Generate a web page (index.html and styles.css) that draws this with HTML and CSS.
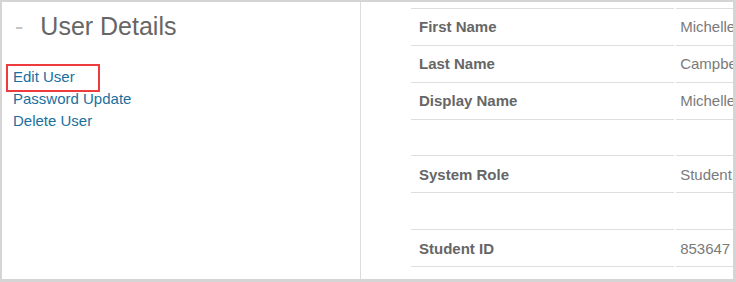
FILE: index.html
```html
<!DOCTYPE html>
<html lang="en">
<head>
    <meta charset="UTF-8">
    <title>User Details</title>
    <link rel="stylesheet" href="styles.css">
</head>
<body>
    <div class="frame">
        <div class="side">
            <h2 class="title"><span class="dash">-</span>User Details</h2>
            <ul class="actions">
                <li><a href="#">Edit User</a></li>
                <li><a href="#">Password Update</a></li>
                <li><a href="#">Delete User</a></li>
            </ul>
            <!-- annotation box round the first link -->
            <div class="callout"></div>
        </div>
        <div class="main">
            <table class="details">
                <colgroup>
                    <col class="label-col">
                    <col class="value-col">
                </colgroup>
                <tr><th>First Name</th><td>Michelle</td></tr>
                <tr><th>Last Name</th><td>Campbell</td></tr>
                <tr><th>Display Name</th><td>Michelle</td></tr>
                <tr class="blank"><th></th><td></td></tr>
                <tr><th>System Role</th><td>Student</td></tr>
                <tr class="blank"><th></th><td></td></tr>
                <tr><th>Student ID</th><td>853647</td></tr>
                <tr><th>Email</th><td>michelle@example.edu</td></tr>
            </table>
        </div>
    </div>
</body>
</html>
```

FILE: styles.css
```css
body {
    margin: 0;
    font-family: "Liberation Sans", Arial, sans-serif;
    background: #fff;
}
.frame {
    display: flex;
    width: 736px;
    height: 282px;
    box-sizing: border-box;
    border: 2px solid #d5d5d5;
    border-right-width: 3px;
    border-bottom-width: 3px;
    overflow: hidden;
}
.side {
    position: relative;
    width: 358px;
    flex-shrink: 0;
    border-right: 1px solid #dcdcdc;
}
.title {
    margin: 0;
    padding: 9px 0 0 13px;
    font-size: 25px;
    font-weight: normal;
    line-height: 30px;
    color: #666;
}
.dash {
    color: #c4c4c4;
    margin-right: 17px;
}
.actions {
    list-style: none;
    margin: 25px 0 0;
    padding: 0 0 0 11px;
}
.actions li {
    font-size: 15px;
    line-height: 22px;
}
.actions a {
    color: #1b6f9e;
    text-decoration: none;
}
.callout {
    position: absolute;
    left: 4px;
    top: 62px;
    width: 90px;
    height: 24px;
    border: 2px solid #ee3b3e;
}
.main {
    flex: 1;
    padding: 6px 0 0 48px;
    min-width: 0;
    overflow: hidden;
}
.details {
    table-layout: fixed;
    width: 460px;
    border-collapse: separate;
    border-spacing: 2px 0;
    font-size: 15px;
    white-space: nowrap;
}
.label-col {
    width: 262px;
}
.value-col {
    width: 190px;
}
.details th,
.details td {
    height: 35.86px;
    padding: 0 8px;
    border-top: 1px solid #dedede;
    text-align: left;
    vertical-align: middle;
}
.details th {
    color: #666;
    font-weight: bold;
}
.details td {
    padding-left: 4px;
    color: #7a7a7a;
}
```
